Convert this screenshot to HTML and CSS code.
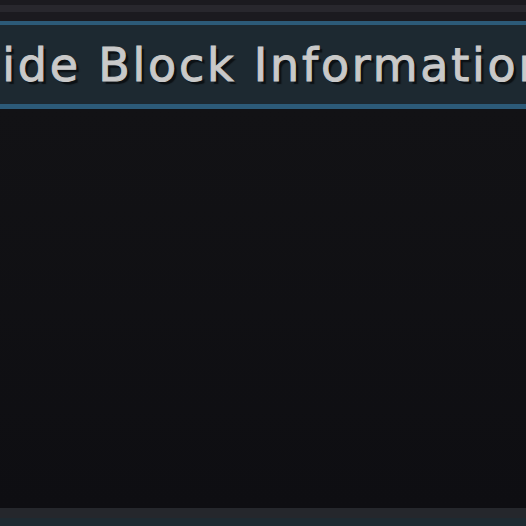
FILE: index.html
```html
<!DOCTYPE html>
<html lang="en">
    <head>
        <meta charset="UTF-8" />
        <meta name="viewport" content="width=device-width, initial-scale=1.0" />
        <title>Block Info</title>
        <link rel="stylesheet" href="styles.css">
    </head>
    <body>
        <div id="screen">
            <!-- 윗쪽 바 -->
            <div class="top-bar">
                <div class="top-stripe"></div>
            </div>
            <!-- 토글 버튼 -->
            <div class="toggle-row">
                <span class="toggle-label">Hide Block Information</span>
            </div>
            <div class="content"></div>
            <div class="bottom-bar">
                <div class="bottom-stripe"></div>
            </div>
        </div>
    </body>
</html>
```

FILE: styles.css
```css
html,
body {
    margin: 0;
    padding: 0;
    background-color: #111114;
}
#screen {
    width: 526px;
    height: 526px;
    display: flex;
    flex-direction: column;
    overflow: hidden;
}

.top-bar {
    height: 21px;
    background-color: #1b1a1f;
    padding-top: 5px;
    box-sizing: border-box;
}
.top-stripe {
    height: 7px;
    background-color: #28272d;
}

.toggle-row {
    height: 79px;
    border-top: 4px solid #2c5a78;
    border-bottom: 5px solid #2c5a78;
    background-color: #1d2931;
    display: flex;
    align-items: center;
    overflow: hidden;
    white-space: nowrap;
}
.toggle-label {
    margin-left: -35px;
    font-family: "DejaVu Sans", sans-serif;
    font-size: 46px;
    letter-spacing: 2.75px;
    line-height: 1;
    color: #c9c9c9;
    -webkit-text-stroke: 1px #c9c9c9;
    text-shadow: 3px 3px 1px #0c1115;
}

.content {
    flex: 1;
    background: linear-gradient(#121215, #0e0e12);
}

.bottom-bar {
    height: 18px;
    background-color: #25272c;
    padding-top: 10px;
    box-sizing: border-box;
}
.bottom-stripe {
    height: 8px;
    background-color: #1e2a31;
}
```
